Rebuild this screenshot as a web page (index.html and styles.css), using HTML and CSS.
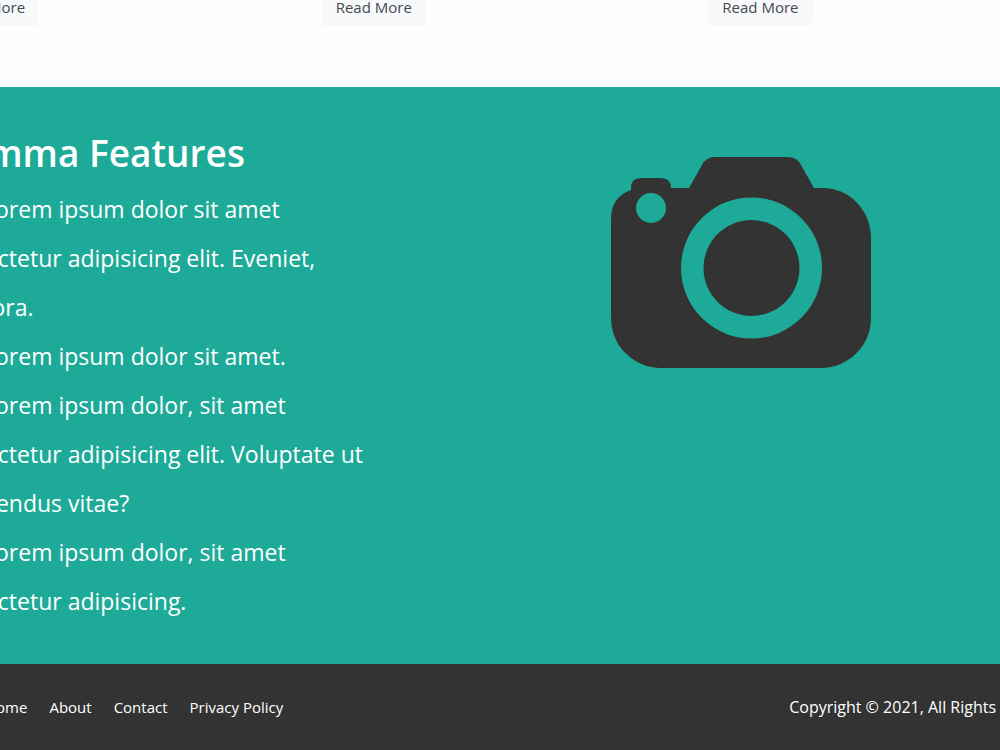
FILE: index.html
```
<!DOCTYPE html>
<html lang="en">
<head>
  <meta charset="UTF-8">
  <meta name="viewport" content="width=device-width, initial-scale=1.0">
  <title>Gamma Features</title>
  <link rel="stylesheet" href="styles.css">
</head>
<body>
  <section class="cards">
    <div class="container cards-row">
      <div class="card"><a href="#" class="btn">Read More</a></div>
      <div class="card"><a href="#" class="btn">Read More</a></div>
      <div class="card"><a href="#" class="btn">Read More</a></div>
    </div>
  </section>

  <section class="features">
    <div class="container features-row">
      <div class="features-text">
        <h2>Gamma Features</h2>
        <ul>
          <li>Lorem ipsum dolor sit amet consectetur adipisicing elit. Eveniet, tempora.</li>
          <li>Lorem ipsum dolor sit amet.</li>
          <li>Lorem ipsum dolor, sit amet consectetur adipisicing elit. Voluptate ut repellendus vitae?</li>
          <li>Lorem ipsum dolor, sit amet consectetur adipisicing.</li>
        </ul>
      </div>
      <div class="features-icon">
        <svg class="camera" viewBox="0 0 260 211" aria-hidden="true">
          <path fill-rule="evenodd" d="M20 33V31Q20 21 30 21H50Q60 21 60 31H78L91 8Q95 0 104 0H177Q186 0 190 8L203 31H212A48 50 0 0 1 260 81V161A50 50 0 0 1 210 211H50A50 50 0 0 1 0 161V62Q0 40 20 33ZM25 51a15 15 0 1 0 30 0a15 15 0 1 0 -30 0ZM70 111a70.5 70.5 0 1 0 141 0a70.5 70.5 0 1 0 -141 0Z"/>
          <circle cx="140.5" cy="111" r="48"/>
        </svg>
      </div>
    </div>
  </section>

  <footer class="footer">
    <div class="container footer-row">
      <nav class="footer-nav">
        <a href="#">Home</a>
        <a href="#">About</a>
        <a href="#">Contact</a>
        <a href="#">Privacy Policy</a>
      </nav>
      <p class="copyright">Copyright © 2021, All Rights Reserved</p>
    </div>
  </footer>
</body>
</html>
```

FILE: styles.css
```
* {margin: 0; padding: 0; box-sizing: border-box;}
body {background-color: #333; color: #fff; font-family: "Segoe UI", "Open Sans", "Noto Sans", sans-serif; font-size: 15px; line-height: 24px; overflow: hidden;}
a {color: inherit; text-decoration: none;}
ul {list-style: none;}
.container {margin: 0 -95px 0 -65px;}

.cards {background-color: #fefefe; padding-bottom: 61px;}
.cards-row {display: grid; grid-template-columns: repeat(3, 1fr); margin-top: -12px;}
.card {display: flex;}
.btn {background-color: #f8f9fa; color: #444a50; padding: 7px 14px; border-radius: 4px;}

.features {background-color: #1daa98; padding: 42px 0 38px;}
.features-row {display: grid; grid-template-columns: 452px 1fr;}
.features h2 {font-size: 37px; font-weight: 600; line-height: 48px; margin-bottom: 8px; padding-left: 4px;}
.features li {font-size: 23px; line-height: 49px;}
.features li::before {content: "✓"; display: inline-block; width: 48px;}
.features-icon {padding-top: 28px; text-align: center;}
.camera {width: 260px; fill: #333;}

.footer {background-color: #333; padding: 31px 0;}
.footer-row {display: flex; justify-content: space-between; padding: 0 26px 0 50px;}
.footer-nav {display: flex; gap: 22px;}
.copyright {font-size: 16px;}
```
